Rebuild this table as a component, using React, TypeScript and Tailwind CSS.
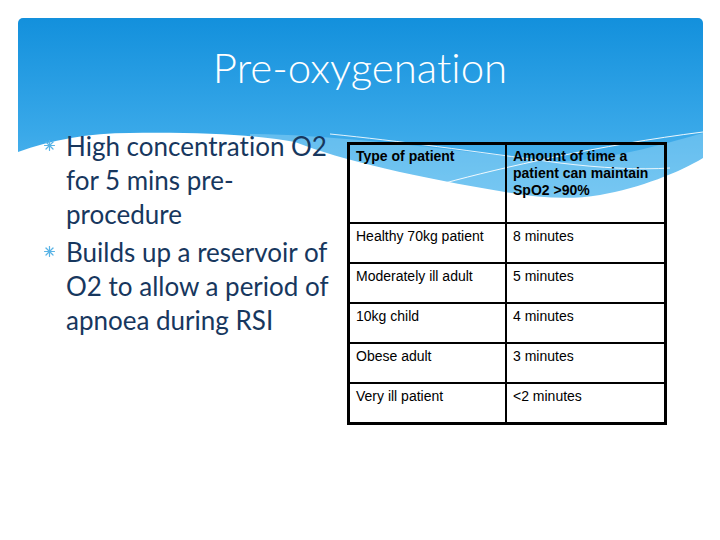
import React from "react";

const Bullet = () => (
    <svg width="11" height="11" viewBox="0 0 10 10" className="mt-[11px] shrink-0">
        <g stroke="#5ab4e6" strokeWidth="1.1" strokeLinecap="round">
            <line x1="5" y1="0.5" x2="5" y2="9.5" />
            <line x1="0.5" y1="5" x2="9.5" y2="5" />
            <line x1="1.8" y1="1.8" x2="8.2" y2="8.2" />
            <line x1="8.2" y1="1.8" x2="1.8" y2="8.2" />
        </g>
    </svg>
);

const rows = [
    ["Healthy 70kg patient", "8 minutes"],
    ["Moderately ill adult", "5 minutes"],
    ["10kg child", "4 minutes"],
    ["Obese adult", "3 minutes"],
    ["Very ill patient", "<2 minutes"],
];

const Backdrop = () => (
    <svg className="absolute inset-0" width="720" height="540" viewBox="0 0 720 540">
        <defs>
            <linearGradient id="sky" x1="0" y1="0" x2="0" y2="1">
                <stop offset="0" stopColor="#1390dc" />
                <stop offset="0.55" stopColor="#3aa9e9" />
                <stop offset="1" stopColor="#6cc3f2" />
            </linearGradient>
        </defs>
        <rect x="18" y="18" width="685" height="212" rx="5" fill="url(#sky)" />
        <path
            d="M250,134 C330,134 450,150 560,162 C620,158 670,142 703,133 L703,232 L250,232 Z"
            fill="#9ad6f6"
            opacity="0.45"
        />
        <path
            d="M18,152 C50,140 90,133 130,133 C200,132 260,135 295,142 C340,160 420,178 505,192 C540,198 570,200 600,195 C640,188 680,172 703,158 L703,240 L18,240 Z"
            fill="#ffffff"
        />
        <path d="M330,134 C400,141 470,151 560,163 C600,168 640,170 670,168" stroke="#ffffff" strokeWidth="1" fill="none" opacity="0.85" />
        <path d="M445,183 C500,168 600,145 703,132" stroke="#ffffff" strokeWidth="1" fill="none" opacity="0.9" />
    </svg>
);

export default function App() {
    return (
        <main className="relative w-[720px] h-[540px] overflow-hidden bg-white [font-variant-ligatures:none]">
            <Backdrop />
            <div className="relative flex flex-col pt-[42px]">
                <h1 className="text-center text-white text-[42px] leading-[50px] font-light font-['Lato',sans-serif]">
                    Pre-oxygenation
                </h1>

                <div className="flex items-start mt-[37px] pl-[44px]">
                    <div className="w-[303px] font-['Lato',sans-serif] text-[26px] leading-[34px] text-[#17375e]">
                        <div className="flex gap-[11px]">
                            <Bullet />
                            <div>
                                <div className="whitespace-nowrap">High concentration O2</div>
                                <div className="whitespace-nowrap">for 5 mins pre-</div>
                                <div className="whitespace-nowrap">procedure</div>
                            </div>
                        </div>
                        <div className="flex gap-[11px] mt-[4px]">
                            <Bullet />
                            <div>
                                <div className="whitespace-nowrap">Builds up a reservoir of</div>
                                <div className="whitespace-nowrap">O2 to allow a period of</div>
                                <div className="whitespace-nowrap">apnoea during RSI</div>
                            </div>
                        </div>
                    </div>

                    <div className="mt-[13px] w-[320px] border-[3px] border-black font-['Liberation_Sans',Arial,sans-serif] text-[14px] leading-[17px] text-black">
                        <div className="grid grid-cols-[157px_1fr] h-[77px] font-bold">
                            <div className="border-r-2 border-black pl-[6px] pt-[3px]">Type of patient</div>
                            <div className="pl-[6px] pt-[3px]">
                                <div>Amount of time a</div>
                                <div>patient can maintain</div>
                                <div>SpO2 &gt;90%</div>
                            </div>
                        </div>
                        {rows.map(([a, b]) => (
                            <div key={a} className="grid grid-cols-[157px_1fr] h-[40px] border-t-2 border-black">
                                <div className="border-r-2 border-black pl-[6px] pt-[4px]">{a}</div>
                                <div className="pl-[6px] pt-[4px]">{b}</div>
                            </div>
                        ))}
                    </div>
                </div>
            </div>
        </main>
    );
}
